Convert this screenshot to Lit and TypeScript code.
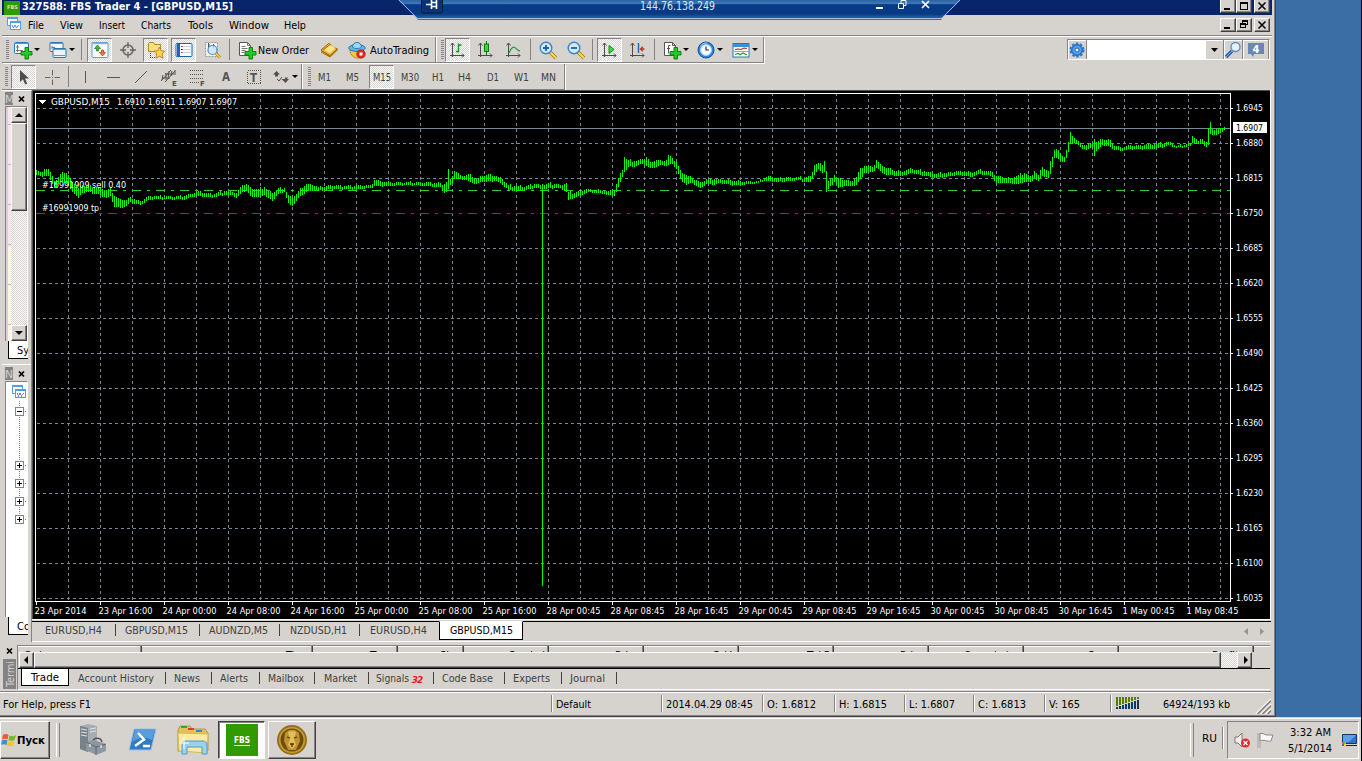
import { LitElement, html, svg, css, nothing, TemplateResult } from "lit";
import { customElement, property } from "lit/decorators.js";
import { classMap } from "lit/directives/class-map.js";
import { styleMap } from "lit/directives/style-map.js";

type Slot = [kind: string, width: number, name?: string, textWidth?: number];

const px = (n: number) => styleMap({ width: `${n}px` });

/* 18x18 icon artwork, keyed by name */
const plus = svg`<path d="M11 6.500h3.500v4h3.500v3.500h-3.500v4h-3.500v-4h-4v-3.500h4z" fill="#23cc23" stroke="#067806" stroke-width=".9"/>`;
const axes = svg`<path d="M3.500 2v14M1 14.500h14M1.500 4.500l2-2.500 2 2.500M13 12.500l2 2-2 2" fill="none" stroke="#4a4a4a"/>`;

const ICONS: Record<string, TemplateResult> = {
  addChart: svg`<rect x=".5" y="1.500" width="14" height="11" rx="1" fill="#f4faff" stroke="#2d74b5"/><path d="M1 2.500h13" stroke="#4e9ade"/><path d="M3.500 4v7M2 9.500h7M2 6h3" stroke="#777" fill="none"/>${plus}`,
  layers: svg`<rect x="1" y="1.500" width="13" height="9" rx="1" fill="#f4faff" stroke="#2d74b5"/><path d="M1 2.500h13" stroke="#4e9ade"/><path d="M3 5v3M3 6.500h3" stroke="#777"/><rect x="4" y="7.500" width="13" height="9" rx="1" fill="#e8f3fc" stroke="#2d74b5"/><path d="M4 8.500h13M5 14.500h11" stroke="#4e9ade"/>`,
  market: svg`<rect x="1" y="1.500" width="16" height="15" rx="1" fill="#fff" stroke="#5ba0d8"/><path d="M1 2.500h16" stroke="#7ab6e4" stroke-width="1.500"/><path d="M6.500 4l3 3.500h-2v2.500h-2v-2.500h-2z" fill="#3fb93f" stroke="#157a15" stroke-width=".7"/><path d="M11.500 15l-3-3.500h2v-2.500h2v2.500h2z" fill="#f07840" stroke="#b03808" stroke-width=".7"/>`,
  target: svg`<circle cx="9" cy="9" r="5" fill="none" stroke="#666" stroke-width="1.600"/><path d="M9 1v6M9 11v6M1 9h6M11 9h6" stroke="#666" stroke-width="1.300"/>`,
  favorites: svg`<path d="M1.500 10.500v-8l1-1h4l1 2h6v7z" fill="#f8df80" stroke="#b78912"/><path d="M3.500 12v5M5 16.500h3" stroke="#333" stroke-dasharray="1 1"/><path d="M12.500 6l1.700 3.700 3.700.5-2.700 2.800.7 4.200-3.400-2-3.500 2 .7-4.200-2.700-2.800 3.800-.5z" fill="#ffd35a" stroke="#b57a10" stroke-width=".9"/>`,
  terminal: svg`<rect x="1" y="2.500" width="16" height="13" rx="1" fill="#fff" stroke="#1b62a8"/><path d="M2 3h3v12h-3z" fill="#1d65b3"/><path d="M7 5.500h9M7 8.500h9M7 11.500h9" stroke="#b4d3ee"/><path d="M6 5.500h1.500M6 11.500h1.500" stroke="#c22"/><path d="M6 8.500h1.500" stroke="#111"/>`,
  tester: svg`<path d="M2.500 1.500h12v14h-12z" fill="#f0f0ee" stroke="#999" stroke-dasharray="2 1"/><path d="M5.500 2v5M10.500 3v5M5 4h2M9 5h3" stroke="#555"/><circle cx="9.500" cy="9" r="4.500" fill="#cfe6fa" fill-opacity=".85" stroke="#4e8cc8" stroke-width="1.200"/><path d="M13 12.500l4 4" stroke="#b08a10" stroke-width="3"/><path d="M13 12.500l4 4" stroke="#f5d550" stroke-width="1.500"/>`,
  newOrder: svg`<path d="M1.500 1.500h8l3 3v10h-11z" fill="#fff" stroke="#555"/><path d="M9.500 1.500v3h3M3.500 5.500h4M3.500 7.500h6M3.500 9.500h4M3.500 11.500h3" stroke="#777" fill="none"/>${plus}`,
  book: svg`<path d="M1 9l7.500-6.500 2 .7 1 2.300 6 2.500-7.500 7.500z" fill="#edba3c" stroke="#a26a08"/><path d="M3 9l7-5.500M1 9.500l9 5 7.500-6.500M1 11l9 5 7.500-7" fill="none" stroke="#a26a08"/><path d="M4.500 9l6-5 5 3-5.500 5z" fill="#ffe48b"/>`,
  auto: svg`<path d="M2 9c0 5 4 8 7.500 8s6-3 6-8z" fill="#f6c646" stroke="#bc8711"/><ellipse cx="9" cy="7" rx="8.300" ry="3.400" fill="#62b7e8" stroke="#2675b0"/><path d="M4.500 6c0-6 9-6 9 0-2 2-7 2-9 0z" fill="#9bd8f6" stroke="#2675b0"/><circle cx="13" cy="13" r="4.300" fill="#df2a20" stroke="#a91108" stroke-width=".6"/><rect x="11.500" y="11.500" width="3" height="3" fill="#fff"/>`,
  bars: svg`${axes}<path d="M9.500 2.500v9M7 10.500h2.500M9.500 4h3" stroke="#159415" stroke-width="1.400" fill="none"/>`,
  candles: svg`${axes}<path d="M9.500 0v14" stroke="#0c780c"/><rect x="7.500" y="3" width="4" height="7.500" fill="#36dd36" stroke="#0c780c"/>`,
  line: svg`${axes}<path d="M4 12c2-6 5-7 7-4.500 1 1.500 2 2 4 2.500" fill="none" stroke="#2b9a3c" stroke-width="1.300"/>`,
  zoomIn: svg`<path d="M11 11l6 6" stroke="#a67c09" stroke-width="3.600"/><path d="M11 11l6 6" stroke="#f7da58" stroke-width="2"/><circle cx="7" cy="7" r="5.800" fill="#cfeafc" stroke="#3c83c6" stroke-width="1.400"/><path d="M4 7h6M7 4v6" stroke="#205f9f" stroke-width="1.800"/>`,
  zoomOut: svg`<path d="M11 11l6 6" stroke="#a67c09" stroke-width="3.600"/><path d="M11 11l6 6" stroke="#f7da58" stroke-width="2"/><circle cx="7" cy="7" r="5.800" fill="#cfeafc" stroke="#3c83c6" stroke-width="1.400"/><path d="M4 7h6" stroke="#205f9f" stroke-width="1.800"/>`,
  scroll: svg`${axes}<path d="M8 4.500l5 4-5 4z" fill="#3ddc3d" stroke="#128a12"/>`,
  shift: svg`${axes}<path d="M9.500 2v10" stroke="#1f64a5" stroke-width="1.400"/><path d="M15.500 8h-4M13.800 5.800l-2.300 2.200 2.300 2.200" fill="none" stroke="#b83818" stroke-width="1.300"/>`,
  indicators: svg`<path d="M1.500 1.500h8l3 3v10h-11z" fill="#fff" stroke="#555"/><path d="M9.500 1.500v3h3M7.500 4.500h-2v8M4 7.500h3" stroke="#555" fill="none"/>${plus}`,
  clock: svg`<circle cx="9" cy="9" r="8" fill="#2e85d8" stroke="#12549a"/><circle cx="9" cy="9" r="5.500" fill="#f4f9fd" stroke="#a6cdf0"/><path d="M9 5.500v3.500h3" fill="none" stroke="#333" stroke-width="1.200"/><path d="M3.500 5.500a7 7 0 0 1 7-3.500" stroke="#9bcdf7" fill="none"/>`,
  template: svg`<rect x="1" y="2.500" width="16" height="13.500" fill="#fff" stroke="#2d74b5"/><path d="M1 3h16v3h-16z" fill="#3f8fd6"/><path d="M1 10.500h16" stroke="#7bb0dc"/><path d="M3 8.500l3-.5 3 .5 3-1.500 3 .5" fill="none" stroke="#a03020" stroke-width="1.200"/><path d="M3 13.500l3-1 2 1.200 3-1.700 4 2" fill="none" stroke="#269535" stroke-width="1.200"/>`,
  cursor: svg`<path d="M5 2v12l3-2.800 2.200 5.300 2-1-2.200-5h4z" fill="#4c4c4c"/>`,
  cross: svg`<path d="M9.500 2v5.500M9.500 11.500v5.500M2 9.500h5.500M11.500 9.500h5.500M9 9.500h1" stroke="#666"/>`,
  vline: svg`<path d="M9.500 3v12" stroke="#555"/>`,
  hline: svg`<path d="M3 9.500h13" stroke="#555"/>`,
  trend: svg`<path d="M3 15l12-12" stroke="#555"/>`,
  channel: svg`<path d="M1 13l10-11M5 14l10-11M3 7l-1 5M6 5l0 7M9 3l-1 8M12 3l-1 5M15 2v5M2 10h8M5 6h9" stroke="#555" fill="none"/><text x="12" y="18" class="mini">E</text>`,
  fibo: svg`<path d="M2 2.500h14M2 6.500h14M2 10.500h14M2 14.500h9" stroke="#555" stroke-dasharray="1 1"/><text x="12" y="18" class="mini">F</text>`,
  textA: svg`<text x="5" y="13" class="glyph">A</text>`,
  textT: svg`<rect x="2.500" y="2.500" width="13" height="13" fill="none" stroke="#555" stroke-dasharray="1 1" shape-rendering="crispEdges"/><text x="5" y="13.500" class="glyph">T</text>`,
  arrows: svg`<path d="M1 6.500l3.500-3.500 3.500 3.500h-2v2h-3v-2zM10 11h3v-1.500h3l-1 1.500h2l-3.500 4-4-4z" fill="#505050"/><path d="M5 11l2 2 3-4" stroke="#505050" fill="none"/>`,
  gear: svg`<circle cx="9" cy="9" r="5.500" fill="#3184dd" stroke="#1d5fae"/><circle cx="9" cy="9" r="6.500" fill="none" stroke="#2d78cc" stroke-width="2" stroke-dasharray="2.500 1.600"/><circle cx="9" cy="9" r="4.300" fill="#5b9fe8"/><circle cx="9" cy="9" r="2" fill="#eef6ff" stroke="#1d5fae"/>`,
  find: svg`<path d="M8 10l-6 6" stroke="#2456a8" stroke-width="3.200"/><path d="M8 10l-6 6" stroke="#80b5f0" stroke-width="1"/><circle cx="11.500" cy="6" r="4.500" fill="#e8f3fd" stroke="#5a8fcb" stroke-width="1.400"/>`,
};

const TOOLBAR: Slot[] = [
  ["grip", 10], ["icon", 21, "addChart"], ["arrow", 8], ["gap", 7], ["icon", 20, "layers"], ["arrow", 8], ["sep", 11],
  ["pressed", 25, "market"], ["gap", 3], ["icon", 25, "target"], ["gap", 3], ["pressed", 25, "favorites"], ["gap", 3],
  ["pressed", 25, "terminal"], ["gap", 3], ["icon", 25, "tester"], ["sep", 11], ["icon", 23, "newOrder"],
  ["label", 56, "New Order", 51], ["icon", 29, "book"], ["icon", 27, "auto"], ["label", 62, "AutoTrading", 59],
  ["edge", 7], ["grip", 6],
  ["pressed", 25, "bars"], ["gap", 3], ["icon", 25, "candles"], ["gap", 3], ["icon", 25, "line"], ["sep", 9],
  ["icon", 25, "zoomIn"], ["gap", 3], ["icon", 25, "zoomOut"], ["sep", 9], ["pressed", 25, "scroll"], ["gap", 3],
  ["icon", 25, "shift"], ["sep", 9], ["gap", 2], ["icon", 22, "indicators"], ["arrow", 5], ["gap", 7],
  ["icon", 22, "clock"], ["arrow", 5], ["gap", 8], ["icon", 22, "template"], ["arrow", 5],
];

const DRAWING: Slot[] = [
  ["grip", 9], ["pressed", 25, "cursor"], ["gap", 3], ["icon", 25, "cross"], ["sep", 9], ["icon", 24, "vline"], ["gap", 3],
  ["icon", 25, "hline"], ["gap", 3], ["icon", 25, "trend"], ["gap", 3], ["icon", 25, "channel"], ["gap", 3],
  ["icon", 25, "fibo"], ["gap", 4], ["icon", 25, "textA"], ["gap", 3], ["icon", 25, "textT"], ["gap", 4],
  ["icon", 22, "arrows"], ["arrow", 5], ["edge", 9], ["grip", 6],
  ["period", 25, "M1", 13], ["gap", 3], ["period", 25, "M5", 13], ["gap", 4], ["active", 25, "M15", 18], ["gap", 3],
  ["period", 25, "M30", 18], ["gap", 3], ["period", 25, "H1", 12], ["gap", 2], ["period", 25, "H4", 13], ["gap", 3],
  ["period", 25, "D1", 12], ["gap", 4], ["period", 25, "W1", 15], ["gap", 2], ["period", 25, "MN", 15],
];

/* [x, high y, low y] outline of the price series, interpolated every 2px */
const SERIES = [
  [36, 170, 174], [40, 172, 175], [44, 169, 175], [48, 169, 175], [52, 176, 183], [55, 182, 188], [58, 177, 183], [62, 172, 180],
  [66, 173, 183], [70, 178, 188], [74, 184, 193], [78, 188, 197], [82, 185, 192], [88, 186, 191], [94, 187, 193], [100, 187, 194],
  [106, 190, 197], [110, 188, 195], [114, 196, 206], [120, 199, 207], [126, 200, 205], [130, 197, 201], [134, 199, 203],
  [140, 201, 204], [146, 197, 200], [154, 196, 198], [170, 196, 198], [184, 196, 199], [190, 194, 196], [198, 191, 195],
  [206, 193, 196], [214, 194, 196], [224, 191, 194], [232, 192, 194], [236, 193, 197], [242, 185, 191], [246, 184, 190],
  [250, 187, 195], [258, 189, 196], [264, 187, 194], [268, 191, 197], [272, 193, 200], [278, 188, 193], [284, 188, 191],
  [288, 195, 202], [291, 198, 206], [296, 194, 200], [300, 188, 195], [306, 184, 191], [312, 185, 190], [318, 187, 190],
  [330, 185, 188], [346, 186, 188], [360, 185, 188], [370, 185, 187], [374, 180, 185], [380, 181, 185], [390, 182, 185],
  [400, 182, 184], [420, 182, 184], [440, 183, 186], [444, 184, 192], [446, 182, 191], [448, 169, 188], [450, 179, 184],
  [454, 171, 178], [460, 175, 178], [466, 175, 179], [470, 174, 181], [476, 179, 183], [482, 176, 181], [490, 174, 180],
  [496, 176, 180], [502, 179, 184], [508, 185, 189], [516, 186, 190], [526, 186, 189], [534, 184, 187], [540, 185, 188],
  [542, 184, 585], [544, 185, 188], [548, 183, 187], [554, 184, 187], [560, 185, 187], [566, 183, 191], [568, 192, 199],
  [574, 193, 197], [580, 190, 194], [590, 189, 191], [600, 190, 192], [608, 191, 194], [614, 190, 195], [618, 178, 186],
  [622, 170, 176], [624, 157, 171], [628, 160, 166], [636, 161, 165], [642, 159, 163], [646, 157, 165], [650, 162, 167],
  [656, 160, 166], [662, 161, 164], [666, 160, 165], [668, 155, 164], [672, 158, 163], [676, 162, 168], [680, 170, 178],
  [686, 175, 184], [692, 178, 182], [700, 182, 187], [706, 179, 183], [714, 179, 184], [720, 179, 182], [730, 180, 184],
  [740, 181, 184], [750, 181, 183], [758, 181, 182], [764, 178, 180], [770, 176, 180], [778, 178, 181], [790, 177, 180],
  [798, 177, 179], [804, 178, 181], [810, 176, 181], [814, 165, 174], [818, 163, 168], [822, 165, 172], [824, 161, 171],
  [826, 171, 191], [828, 181, 188], [834, 175, 181], [838, 178, 187], [844, 180, 185], [850, 181, 185], [856, 177, 184],
  [860, 168, 178], [864, 166, 172], [870, 166, 171], [874, 165, 170], [876, 160, 167], [880, 164, 170], [886, 168, 174],
  [892, 170, 174], [900, 171, 175], [912, 169, 172], [924, 171, 175], [936, 174, 177], [950, 172, 175], [960, 171, 174],
  [970, 172, 176], [978, 170, 173], [988, 171, 174], [992, 172, 176], [996, 176, 183], [1002, 177, 182], [1010, 178, 182],
  [1018, 175, 183], [1024, 173, 181], [1030, 176, 181], [1034, 171, 177], [1038, 175, 180], [1042, 167, 175], [1048, 171, 177],
  [1050, 161, 173], [1054, 150, 157], [1057, 149, 157], [1060, 153, 160], [1064, 157, 161], [1067, 147, 155], [1070, 132, 143],
  [1074, 138, 142], [1080, 143, 146], [1086, 145, 149], [1092, 144, 147], [1094, 139, 155], [1096, 142, 150], [1102, 139, 144],
  [1110, 140, 146], [1114, 146, 149], [1120, 147, 150], [1130, 145, 148], [1140, 145, 148], [1150, 144, 148], [1158, 143, 147],
  [1170, 142, 144], [1176, 146, 147], [1190, 143, 145], [1192, 136, 142], [1198, 141, 143], [1202, 139, 143], [1206, 142, 146],
  [1208, 128, 144], [1210, 122, 133], [1212, 129, 134], [1216, 129, 134], [1220, 128, 132], [1224, 126, 129],
];

const TIMES = [
  "23 Apr 2014", "23 Apr 16:00", "24 Apr 00:00", "24 Apr 08:00", "24 Apr 16:00", "25 Apr 00:00", "25 Apr 08:00",
  "25 Apr 16:00", "28 Apr 00:45", "28 Apr 08:45", "28 Apr 16:45", "29 Apr 00:45", "29 Apr 08:45", "29 Apr 16:45",
  "30 Apr 00:45", "30 Apr 08:45", "30 Apr 16:45", "1 May 00:45", "1 May 08:45",
];

function seriesPath() {
  let d = "";
  let k = 0;
  for (let x = 36; x <= 1224; x += 2) {
    while (k < SERIES.length - 2 && SERIES[k + 1][0] <= x) k++;
    const [x0, h0, l0] = SERIES[k];
    const [x1, h1, l1] = SERIES[k + 1];
    // the spike bar must not bleed into its neighbours
    const t = l0 > 500 || l1 > 500 ? (x === x1 ? 1 : 0) : (x - x0) / (x1 - x0);
    const wobble = x === x0 ? 0 : ((x * 7) % 5) / 2 - 1;
    const high = Math.round(h0 + (h1 - h0) * t + wobble);
    const low = Math.round(l0 + (l1 - l0) * t + wobble / 2);
    d += `M${x + 0.5} ${high}V${Math.max(low, high + 1) + 1}`;
  }
  return d;
}

const shared = css`
  .text {
    display: block;
    flex: none;
    overflow: visible;
    font-family: "DejaVu Sans Condensed", "DejaVu Sans", sans-serif;
    font-size: 11px;
    fill: currentColor;
  }

  .text.bold {
    font-weight: bold;
  }
`;

/** Single-line caption fitted to a fixed advance width. */
const label = (text: string, width: number, cls = "") => html`
  <svg class="text ${cls}" width=${width} height="14">
    <text y="11" textLength=${width} lengthAdjust="spacingAndGlyphs">${text}</text>
  </svg>
`;

@customElement("price-chart")
export class PriceChart extends LitElement {
  static styles = css`
    :host {
      display: block;
      width: 1238px;
      height: 529px;
      border-right: 1px solid #fff;
      background: #000;
    }

    svg {
      display: block;
      shape-rendering: crispEdges;
    }

    text {
      font-family: "DejaVu Sans Condensed", "DejaVu Sans", sans-serif;
      font-size: 9.5px;
      fill: #fff;
    }

    .grid {
      stroke: #778899;
      stroke-dasharray: 3 3;
      fill: none;
    }

    .order {
      stroke: #32cd32;
      stroke-dasharray: 9 6 3 6;
    }

    .profit {
      stroke: #f00;
    }

    .series {
      stroke: #0f0;
      fill: none;
    }

    .dark {
      fill: #000;
    }
  `;

  render() {
    const columns = Array.from({ length: 37 }, (_, i) => 68 + i * 32);
    const rows = Array.from({ length: 15 }, (_, i) => 108 + i * 35);
    return html`
      <svg width="1238" height="529" viewBox="32 90 1238 529">
        <path d="M32 90.500h1238M32.500 90v529" stroke="#505050" fill="none" />
        <path class="grid" d=${rows.map((y) => `M37 ${y + 0.5}H1230`).join("")} />
        <path d="M36 213.500H1230" stroke="#000" />
        <path class="grid" d=${columns.map((x) => `M${x + 0.5} 93V601`).join("")} />
        <path d="M36 128.500H1230" stroke="#778899" />
        <path class="order" d="M36 190.500H1230" />
        <path class="order profit" d="M36 213.500H1230" />
        <path class="series" d=${seriesPath()} />
        <path d="M35.500 93.500H1230.500V601.500H35.500z" stroke="#fff" fill="none" />
        <path d="M39 100h7l-3.500 4z" fill="#fff" />
        <text x="51" y="105" textLength="59" lengthAdjust="spacingAndGlyphs">GBPUSD,M15</text>
        <text x="117" y="105" textLength="120" lengthAdjust="spacingAndGlyphs">1.6910 1.6911 1.6907 1.6907</text>
        <text x="42" y="188" textLength="84" lengthAdjust="spacingAndGlyphs">#16991909 sell 0.40</text>
        <text x="42" y="211" textLength="57" lengthAdjust="spacingAndGlyphs">#16991909 tp</text>
        ${rows.map(
          (y, i) => svg`
            <path d="M1231 ${y + 0.5}h2" stroke="#fff"/>
            <text x="1236" y=${y + 3} textLength="27" lengthAdjust="spacingAndGlyphs">${(1.6945 - i * 0.0065).toFixed(4)}</text>
          `,
        )}
        <path d="M1233 122h34v11h-34z" fill="#fff" />
        <text class="dark" x="1236" y="131" textLength="27" lengthAdjust="spacingAndGlyphs">1.6907</text>
        ${TIMES.map(
          (t, i) => svg`
            <path d="M${36.5 + i * 64} 602v3" stroke="#fff"/>
            <text x=${34.5 + i * 64} y="614" textLength=${i === 0 || i > 16 ? 52 : 54} lengthAdjust="spacingAndGlyphs">${t}</text>
          `,
        )}
      </svg>
    `;
  }
}

@customElement("tool-strip")
export class ToolStrip extends LitElement {
  @property({ attribute: false })
  items: Slot[] = [];

  static styles = [
    shared,
    css`
      :host {
        display: flex;
        align-items: center;
        height: 25px;
        border-right: 1px solid #848284;
        border-bottom: 1px solid #848284;
        box-shadow: 1px 1px #fff;
      }

      .slot {
        display: flex;
        flex: none;
        align-items: center;
        justify-content: center;
        box-sizing: border-box;
        height: 24px;
      }

      .pressed {
        border: 1px solid;
        border-color: #848284 #fff #fff #848284;
        background: conic-gradient(#fff 25%, #d6d3ce 0 50%, #fff 0 75%, #d6d3ce 0) 0 0 / 2px 2px;
      }

      .label {
        justify-content: flex-start;
      }

      .period {
        color: #404040;
      }

      .icon {
        display: block;
        flex: none;
        overflow: visible;
      }

      .grip {
        width: 3px;
        height: 19px;
        background: repeating-linear-gradient(#848284 0 1px, #d6d3ce 1px 2px);
      }

      .line {
        width: 1px;
        height: 21px;
        background: #848284;
      }

      .edge {
        width: 1px;
        height: 25px;
        background: #848284;
        border-right: 1px solid #fff;
      }

      .caret {
        border: 3px solid transparent;
        border-top: 3px solid #000;
        border-bottom: 0;
      }

      .mini {
        font: bold 7px "DejaVu Sans", sans-serif;
        fill: #505050;
      }

      .glyph {
        font: bold 11.5px "DejaVu Sans Condensed", sans-serif;
        fill: #555;
      }
    `,
  ];

  private content([kind, , name = "", textWidth = 0]: Slot) {
    switch (kind) {
      case "grip":
        return html`<span class="grip"></span>`;
      case "sep":
        return html`<span class="line"></span>`;
      case "edge":
        return html`<span class="edge"></span>`;
      case "arrow":
        return html`<span class="caret"></span>`;
      case "label":
      case "period":
      case "active":
        return label(name, textWidth);
      case "gap":
        return nothing;
      default:
        return html`<svg class="icon" width="18" height="18">${ICONS[name]}</svg>`;
    }
  }

  render() {
    return this.items.map((item) => {
      const [kind, width] = item;
      const classes = {
        slot: true,
        pressed: kind === "pressed" || kind === "active",
        period: kind === "period" || kind === "active",
        label: kind === "label",
      };
      return html`<span class=${classMap(classes)} style=${px(width)}>${this.content(item)}</span>`;
    });
  }
}

@customElement("app-root")
export class AppRoot extends LitElement {
  static styles = [
    shared,
    css`
      :host {
        display: flex;
        flex-direction: column;
        position: relative;
        box-sizing: border-box;
        width: 1362px;
        height: 761px;
        overflow: hidden;
        border-right: 1px solid #000;
        background: #3a6ea5;
        color: #000;
      }

      .window {
        display: flex;
        flex-direction: column;
        flex: none;
        box-sizing: border-box;
        width: 1276px;
        height: 717px;
        padding-left: 2px;
        background: #d6d3ce;
        border-right: 1px solid #424142;
        border-bottom: 1px solid #424142;
        box-shadow: inset -1px -1px #848284;
      }

      .row {
        display: flex;
        align-items: center;
        flex: none;
      }

      .title {
        width: 1270px;
        height: 15px;
        background: #08246b;
        color: #fff;
      }

      .badge {
        width: 16px;
        height: 14px;
        margin: 0 2px 0 2px;
      }

      .title .text {
        margin-top: -4px;
      }

      .menu {
        width: 1270px;
        height: 20px;
      }

      .menu-icon {
        width: 21px;
        padding-left: 5px;
      }

      .controls {
        display: flex;
        margin-left: auto;
        padding-right: 2px;
      }

      .title .controls {
        margin-top: -4px;
      }

      .control {
        display: block;
        box-sizing: border-box;
        width: 16px;
        height: 14px;
        background: #d6d3ce;
        border: 1px solid;
        border-color: #fff #424142 #424142 #fff;
        box-shadow: inset -1px -1px #848284;
      }

      .control:last-child {
        margin-left: 2px;
      }

      .bars {
        align-items: flex-start;
        justify-content: space-between;
        border-top: 1px solid #848284;
        box-shadow: inset 0 1px #fff;
        padding-top: 1px;
        box-sizing: border-box;
        height: 28px;
        width: 1270px;
      }

      .bars.lower {
        border-top: 0;
        box-shadow: none;
        height: 27px;
      }

      .search {
        display: flex;
        box-sizing: border-box;
        width: 203px;
        height: 21px;
        margin: 2px 2px 0 0;
        border: 1px solid;
        border-color: #848284 #fff #fff #848284;
      }

      .search span {
        display: flex;
        align-items: center;
        justify-content: center;
        box-sizing: border-box;
        width: 19px;
        border-right: 1px solid #848284;
        box-shadow: inset 1px 1px #fff;
      }

      .search .field {
        width: 118px;
        background: #fff;
        border: 0;
      }

      .search .chat {
        width: 26px;
      }

      .work {
        display: flex;
        flex: none;
        height: 552px;
      }

      .side {
        display: flex;
        flex-direction: column;
        box-sizing: border-box;
        width: 30px;
        border-top: 1px solid #fff;
        border-right: 1px solid #848284;
        padding-left: 3px;
      }

      .caption {
        display: flex;
        align-items: center;
        flex: none;
        gap: 5px;
        height: 13px;
        margin: 1px 0;
      }

      .caption span {
        display: block;
        width: 8px;
        height: 13px;
        overflow: hidden;
        background: #848284;
        color: #d6d3ce;
      }

      .panel {
        display: flex;
        flex: none;
        align-items: flex-start;
        box-sizing: border-box;
        width: 23px;
        height: 236px;
        overflow: hidden;
        background: #fff;
        border-left: 1px solid #848284;
        border-top: 1px solid #848284;
        border-right: 1px solid #fff;
      }

      .market {
        height: 235px;
        align-items: stretch;
      }

      .tree {
        flex: none;
      }

      .thumbs {
        width: 5px;
        background: linear-gradient(90deg, #d6cfe4 0 2px, transparent 2px),
          repeating-linear-gradient(transparent 0 17px, #c7b0cc 17px 18px, transparent 18px 40px),
          linear-gradient(#fbe4e4 0 60%, #fff6dc 60%);
      }

      .vscroll {
        display: flex;
        flex-direction: column;
        flex: none;
        width: 16px;
        background: conic-gradient(#fff 25%, #d6d3ce 0 50%, #fff 0 75%, #d6d3ce 0) 0 0 / 2px 2px;
      }

      .raised {
        display: flex;
        align-items: center;
        justify-content: center;
        flex: none;
        box-sizing: border-box;
        background: #d6d3ce;
        border: 1px solid;
        border-color: #fff #424142 #424142 #fff;
        box-shadow: inset -1px -1px #848284;
      }

      .step {
        height: 16px;
      }

      .thumb {
        height: 88px;
      }

      .vscroll .step:last-child {
        margin-top: auto;
      }

      .sidetab {
        flex: none;
        box-sizing: border-box;
        width: 20px;
        height: 18px;
        margin-left: 3px;
        padding: 2px 0 0 8px;
        overflow: hidden;
        background: #fff;
        border-left: 1px solid #000;
        border-bottom: 1px solid #000;
      }

      .divider {
        flex: none;
        height: 1px;
        margin: 5px 0 1px -3px;
        background: #fff;
      }

      .charts {
        width: 1239px;
      }

      .charttabs {
        box-sizing: border-box;
        height: 23px;
        border-top: 1px solid #fff;
        border-bottom: 1px solid #fff;
        color: #404040;
        width: 1239px;
        align-items: stretch;
      }

      .charttabs::before {
        content: "";
        width: 2px;
        border-top: 1px solid #000;
        margin-top: 1px;
      }

      .tab {
        display: flex;
        align-items: center;
        justify-content: center;
        flex: none;
        box-sizing: border-box;
        border-top: 1px solid #000;
        margin-top: 1px;
        padding: 0 3px 3px 0;
      }

      .tab i {
        width: 1px;
        height: 12px;
        background: #404040;
      }

      .tab.mark {
        width: 1px;
        padding-right: 0;
      }

      .tab.on {
        border: 1px solid #000;
        border-top-color: #fff;
        background: #fff;
        color: #000;
        padding: 0 0 1px;
        margin-bottom: 1px;
      }

      .tabrest {
        display: flex;
        flex: 1;
        align-items: center;
        justify-content: flex-end;
        gap: 9px;
        margin-top: 1px;
        padding-right: 4px;
        border-top: 1px solid #000;
      }

      .terminal {
        display: flex;
        height: 49px;
        box-sizing: border-box;
        padding-top: 3px;
      }

      .termcap {
        display: flex;
        flex-direction: column;
        width: 15px;
        padding-top: 2px;
        align-items: center;
      }

      .termcap .upright {
        width: 13px;
        height: 30px;
        margin-top: 4px;
        background: #848284;
        overflow: hidden;
      }

      .upright text {
        fill: #d6d3ce;
        font: 11px "DejaVu Sans Condensed", sans-serif;
      }

      .termbody {
        width: 1252px;
        height: 44px;
        border-left: 1px solid #848284;
        border-bottom: 1px solid #fff;
      }

      .heads {
        display: flex;
        height: 7px;
        overflow: hidden;
        box-sizing: border-box;
        border-top: 1px solid #848284;
        box-shadow: inset 0 1px #fff;
      }

      .head {
        display: flex;
        justify-content: flex-end;
        box-sizing: border-box;
        flex: none;
        padding: 2px 3px 0 0;
        border-right: 1px solid #424142;
        box-shadow: inset -1px 0 #848284;
      }

      .head.first {
        justify-content: flex-start;
        padding-left: 6px;
      }

      .head.last {
        padding-right: 14px;
      }

      .hscroll {
        display: flex;
        height: 16px;
        border-bottom: 1px solid #000;
        padding-left: 1px;
      }

      .hscroll .step {
        width: 15px;
      }

      .hscroll .thumb {
        width: 1187px;
        height: 16px;
      }

      .hscroll .track {
        width: 16px;
        background: conic-gradient(#fff 25%, #d6d3ce 0 50%, #fff 0 75%, #d6d3ce 0) 0 0 / 2px 2px;
      }

      .termtabs {
        height: 20px;
        color: #404040;
        align-items: flex-start;
      }

      .termtabs .tab {
        height: 19px;
        margin-top: 0;
        padding-bottom: 1px;
        border-top: 0;
      }

      .termtabs .on {
        height: 17px;
        border: 1px solid #000;
        border-top: 0;
      }

      .count {
        font: italic bold 9px "DejaVu Sans", sans-serif;
        color: #f01818;
        padding: 4px 1px 0 3px;
        letter-spacing: -1px;
      }

      .status {
        width: 1271px;
        height: 24px;
        box-sizing: border-box;
        border-top: 1px solid #848284;
        box-shadow: inset 0 1px #fff;
        margin-left: -2px;
        padding-left: 3px;
        flex: none;
      }

      .field-cell {
        display: flex;
        align-items: center;
        height: 17px;
        box-sizing: border-box;
        padding-left: 4px;
        border-left: 1px solid #848284;
        box-shadow: inset 1px 0 #fff;
        flex: none;
      }

      .sizer {
        margin-left: auto;
        padding-top: 5px;
      }

      .taskbar {
        display: flex;
        box-sizing: border-box;
        width: 1361px;
        height: 44px;
        background: #d6d3ce;
        box-shadow: inset 0 1px #d6d3ce, inset 0 2px #fff;
        padding-top: 4px;
      }

      .start {
        width: 50px;
        height: 38px;
        justify-content: flex-start;
      }

      .handle {
        width: 2px;
        height: 34px;
        margin: 2px 0 0 6px;
        border-left: 1px solid #fff;
        border-right: 1px solid #848284;
      }

      .apps {
        display: flex;
        flex: 1;
        margin-left: 8px;
      }

      .app {
        display: flex;
        align-items: center;
        justify-content: center;
        box-sizing: border-box;
        width: 50px;
        height: 38px;
      }

      .app.raised {
        width: 48px;
      }

      .app.sunk {
        width: 47px;
        margin-right: 3px;
        border: 1px solid;
        border-color: #424142 #fff #fff #424142;
        box-shadow: inset 1px 1px #848284;
        background: #fff;
      }

      .lang {
        margin: 10px 5px 0 8px;
      }

      .tray {
        display: flex;
        align-items: center;
        box-sizing: border-box;
        width: 132px;
        height: 38px;
        margin-right: 2px;
        margin-left: 2px;
        border: 1px solid;
        border-color: #848284 #fff #fff #848284;
        padding-left: 6px;
      }

      .clock {
        display: flex;
        flex-direction: column;
        align-items: center;
        gap: 2px;
        width: 46px;
        margin: 0 8px 0 13px;
      }

      .rdp {
        position: absolute;
        left: 398px;
        top: 0;
        display: block;
      }

      .rdp text {
        font: 11.5px "DejaVu Sans Condensed", sans-serif;
        fill: #dbe8f8;
      }
    `,
  ];

  private winIconArt() {
    return svg`
      <path d="M.5 .5h10v8h-10z" fill="#fff" stroke="#4d9fe0"/><path d="M0 1h11" stroke="#4d9fe0" stroke-width="2"/>
      <path d="M3.500 4.500h10v8h-10z" fill="#fff" stroke="#4d9fe0"/><path d="M3 5h11" stroke="#4d9fe0" stroke-width="2"/>
      <path d="M5 8l1.500 3 1.500-3 1.500 3 2-3" stroke="#6b7fd8" fill="none"/>`;
  }

  private controls(middle: TemplateResult) {
    const glyph = (art: TemplateResult) =>
      html`<svg class="control" viewBox="0 0 14 12" shape-rendering="crispEdges">${art}</svg>`;
    return html`
      <span class="controls">
        ${glyph(svg`<path d="M3 9h6" stroke="#000" stroke-width="2"/>`)} ${glyph(middle)}
        ${glyph(svg`<path d="M3.500 2.500l7 7M10.500 2.500l-7 7" stroke="#000" stroke-width="1.500" shape-rendering="auto"/>`)}
      </span>
    `;
  }

  private cross() {
    return html`<svg width="8" height="8"><path d="M1 1.500l5 5M6 1.500l-5 5" stroke="#000" stroke-width="1.700" /></svg>`;
  }

  private triangle(d: string, fill = "#000") {
    return html`<svg width="8" height="8"><path d=${d} fill=${fill} /></svg>`;
  }

  private renderSide() {
    const boxes = [411, 465, 483, 501, 519];
    return html`
      <div class="side">
        <div class="caption"><span>${label("M", 9)}</span>${this.cross()}</div>
        <div class="panel market">
          <div class="thumbs"></div>
          <div class="vscroll">
            <div class="raised step">${this.triangle("M0 6l4-4 4 4z")}</div>
            <div class="raised thumb"></div>
            <div class="raised step">${this.triangle("M0 2l4 4 4-4z")}</div>
          </div>
        </div>
        <div class="sidetab">${label("Sy", 12)}</div>
        <div class="divider"></div>
        <div class="caption"><span>${label("N", 8)}</span>${this.cross()}</div>
        <div class="panel">
          <svg class="tree" width="22" height="235" viewBox="6 382 22 235" shape-rendering="crispEdges">
            <path d="M19.500 401V519" stroke="#848284" stroke-dasharray="1 1" />
            <g transform="translate(12 385)">${this.winIconArt()}</g>
            ${boxes.map(
              (y, i) => svg`
                <rect x="15.500" y=${y - 3.5} width="8" height="8" fill="#fff" stroke="#848284"/>
                <path d="M17 ${y + 0.5}h5${i ? `M19.5 ${y - 2}v5` : ""}" stroke="#000"/>
                <path d="M25 ${y + 0.5}h1" stroke="#848284"/>
              `,
            )}
          </svg>
        </div>
        <div class="sidetab">${label("Co", 13)}</div>
      </div>
    `;
  }

  private renderCharts() {
    const tabs: [string, number, number][] = [
      ["EURUSD,H4", 57, 81],
      ["GBPUSD,M15", 63, 83],
      ["AUDNZD,M5", 59, 79],
      ["NZDUSD,H1", 57, 79],
      ["EURUSD,H4", 57, 79],
    ];
    return html`
      <div class="charts">
        <price-chart></price-chart>
        <div class="row charttabs">
          ${tabs.map(
            ([name, textWidth, width], i) => html`
              <span class="tab" style=${px(width)}>${label(name, textWidth)}</span>
              ${i < 4 ? html`<span class="tab mark"><i></i></span>` : nothing}
            `,
          )}
          <span class="tab on" style=${px(84)}>${label("GBPUSD,M15", 63)}</span>
          <span class="tabrest">
            ${this.triangle("M6 0v7l-4-3.500z", "#949294")} ${this.triangle("M1 0v7l4-3.500z", "#949294")}
          </span>
        </div>
      </div>
    `;
  }

  private renderTerminal() {
    const heads: [string, number, number][] = [
      ["Order", 28, 124], ["Time", 23, 171], ["Type", 24, 85], ["Size", 20, 66], ["Symbol", 36, 85], ["Price", 25, 95],
      ["S / L", 22, 95], ["T / P", 23, 95], ["Price", 25, 95], ["Commission", 56, 95], ["Swap", 27, 95], ["Profit", 27, 135],
    ];
    // label, text width, distance to the divider that follows
    const tabs: [string, number, number][] = [
      ["Account History", 76, 97], ["News", 26, 46], ["Alerts", 28, 48], ["Mailbox", 36, 55], ["Market", 33, 54],
      ["Signals", 33, 65], ["Code Base", 51, 71], ["Experts", 37, 57], ["Journal", 35, 55],
    ];
    return html`
      <div class="terminal">
        <div class="termcap">
          ${this.cross()}
          <svg class="upright"><text transform="translate(11 28) rotate(-90)" textLength="26">Termi</text></svg>
        </div>
        <div class="termbody">
          <div class="heads">
            ${heads.map(
              ([name, textWidth, width], i) => html`
                <span class="head ${i === 0 ? "first" : i === 11 ? "last" : ""}" style=${px(width)}>
                  ${label(name, textWidth)}
                </span>
              `,
            )}
          </div>
          <div class="hscroll">
            <div class="raised step">${this.triangle("M5 0v8l-4-4z")}</div>
            <div class="raised thumb"></div>
            <div class="track"></div>
            <div class="raised step">${this.triangle("M3 0v8l4-4z")}</div>
          </div>
          <div class="row termtabs">
            <span class="tab" style=${px(2)}></span>
            <span class="tab on" style=${px(48)}>${label("Trade", 28)}</span>
            ${tabs.map(
              ([name, textWidth, width]) => html`
                <span class="tab" style=${px(width - 1)}>
                  ${label(name, textWidth)} ${name === "Signals" ? html`<span class="count">32</span>` : nothing}
                </span>
                <span class="tab mark"><i></i></span>
              `,
            )}
          </div>
        </div>
      </div>
    `;
  }

  private renderStatus() {
    const cells: [string, number, number][] = [
      ["Default", 35, 110], ["2014.04.29 08:45", 87, 101], ["O: 1.6812", 49, 72], ["H: 1.6815", 48, 70],
      ["L: 1.6807", 46, 69], ["C: 1.6813", 48, 71], ["V: 165", 31, 66],
    ];
    return html`
      <div class="row status">
        <span style=${px(548)}>${label("For Help, press F1", 88)}</span>
        ${cells.map(
          ([text, textWidth, width]) => html`
            <span class="field-cell" style=${px(width)}>${label(text, textWidth)}</span>
          `,
        )}
        <span class="field-cell" style=${px(53)}>
          <svg width="25" height="13" shape-rendering="crispEdges">
            ${[0, 1, 2, 3, 4, 5, 6, 7].map(
              (i) => svg`
                <path d="M${2 + i * 3} 0V${9 - i}" stroke="#5a7d00" stroke-width="2"/>
                <path d="M${2 + i * 3} ${10 - i}V12" stroke="#083c66" stroke-width="2"/>
              `,
            )}
          </svg>
        </span>
        ${label("64924/193 kb", 67)}
        <svg class="sizer" width="16" height="16">
          <path d="M1 16L16 1M6 16L16 6M11 16l5-5" stroke="#fff" stroke-width="1.500" />
          <path d="M2.500 16L16 2.500M7.500 16L16 7.500M12.500 16l3.500-3.500" stroke="#848284" stroke-width="1.700" />
        </svg>
      </div>
    `;
  }

  private renderTaskbar() {
    return html`
      <div class="taskbar">
        <div class="raised start">
          <svg width="16" height="16">
            <path d="M2 3c2-1.500 4-1 5.500 0l-1 4.500c-2-1-4-1-5.500 0z" fill="#ef5a28" />
            <path d="M8.500 3.500c2 1 4 1 6.500-.5l-1.500 5c-2 1-4 1-6 0z" fill="#75b82a" />
            <path d="M1 8.500c1.500-1 3.500-1 5.500 0l-1 4.500c-2-1-4-1-5.500 0z" fill="#3b8ede" />
            <path d="M7 9c2 1 4 1 6.500 0l-1.500 4.500c-2 1-4 1-6.500 0z" fill="#f5c52a" />
          </svg>
          ${label("Пуск", 28, "bold")}
        </div>
        <span class="handle"></span>
        <div class="apps">
          <span class="app">
            <svg width="30" height="32">
              <path d="M2 2l8-2 9 2v22l-9 4-8-3z" fill="#a6aeb4" />
              <path d="M2 2l8 2v24l-8-3z" fill="#78828a" />
              <path d="M3 5l6 1M3 8l6 1M3 11l6 1M12 5l6-1M12 8l6-1" stroke="#dde3e7" />
              <path d="M15 18c0-5 8-5 9 0" fill="none" stroke="#4c565e" stroke-width="1.500" />
              <path d="M8 18l8-2 12 4v7l-10 4-10-5z" fill="#8d98a1" />
              <path d="M8 18l10 5 10-3M18 23v8" fill="none" stroke="#5c6870" />
              <path d="M12 20v3M23 21v3" stroke="#dde3e7" stroke-width="1.500" />
            </svg>
          </span>
          <span class="app">
            <svg width="28" height="24">
              <path d="M5 1h22l-5 21H0z" fill="#2f7bc4" stroke="#9cc4e8" />
              <path d="M6 2h20l-3 10C15 8 9 10 3 14z" fill="#5b9dd8" />
              <path d="M9 5l6 6.500L6 18M14 18h7" fill="none" stroke="#fff" stroke-width="2.500" />
            </svg>
          </span>
          <span class="app">
            <svg width="34" height="32">
              <path d="M2 6l2-4h10l2 3h13l3 4v18H2z" fill="#e3c05c" stroke="#ba9638" />
              <path d="M5 3h6" stroke="#2ba84a" stroke-width="2" />
              <path d="M12 5h6" stroke="#d8402e" stroke-width="2" />
              <path d="M20 7h6" stroke="#3c86d0" stroke-width="2" />
              <path d="M2 9l30 1-1 19-28-2z" fill="#fbe9a4" stroke="#d9b955" />
              <path d="M6 30V21c0-3 2-4 4-4h17c2 0 4 1 4 4v9h-5v-7H11v7z" fill="#9ad2ee" stroke="#4e9cc8" />
              <path d="M8 13v12M3 19h10" stroke="#fff" />
            </svg>
          </span>
          <span class="app sunk">
            <svg width="32" height="32">
              <path d="M0 0h32v32H0z" fill="#319a00" />
              <text x="8" y="19" textLength="16" lengthAdjust="spacingAndGlyphs" fill="#fff" font-family="DejaVu Sans Condensed" font-weight="bold" font-size="9.500">FBS</text>
              <path d="M8 21.500h16" stroke="#fff" />
            </svg>
          </span>
          <span class="app raised">
            <svg width="32" height="32">
              <circle cx="16" cy="16" r="15" fill="#96701a" />
              <circle cx="16" cy="16" r="13" fill="#caa03a" />
              <circle cx="16" cy="16" r="11.500" fill="#6d4c0c" />
              <path d="M9 9l4-3h6l4 3 1 8-4 9h-8l-4-9z" fill="#c0932f" />
              <path d="M12 8l2 7-2 6 4 4 4-4-2-6 2-7-4-1z" fill="#e2bd5c" />
              <path d="M11 13l3 1M21 13l-3 1M14 20h4M16 20v3" stroke="#4c3206" stroke-width="1.300" />
            </svg>
          </span>
        </div>
        <span class="handle"></span>
        <span class="lang">${label("RU", 15)}</span>
        <svg width="3" height="30"><path d="M.5 6v22" stroke="#848284" /><path d="M1.500 6v22" stroke="#fff" /></svg>
        <div class="tray">
          <svg width="40" height="18">
            <path d="M1 6h3l4-4v14l-4-4H1z" fill="#eee" stroke="#777" />
            <circle cx="11.500" cy="12" r="4.500" fill="#e02c2c" />
            <path d="M9.500 10l4 4M13.500 10l-4 4" stroke="#fff" stroke-width="1.300" />
            <path d="M25 2v15" stroke="#777" stroke-width="2.500" />
            <path d="M25 2v15" stroke="#fff" />
            <path d="M26 2.500c3-1 5 2 8 1.500h5l-2 6c-4 1-7-2-11 0z" fill="#f8f8f8" stroke="#888" />
          </svg>
          <div class="clock">${label("3:32 AM", 41)} ${label("5/1/2014", 44)}</div>
          <svg width="17" height="15">
            <path d="M1.500 1.500h14v9h-14z" fill="#2e72d0" stroke="#14386e" />
            <path d="M2 2h13l-7 7H2z" fill="#5fa0ec" />
            <path d="M5 12h11v1H5z" fill="#222" />
            <path d="M1 9h2v2H1z" fill="#f25c22" /><path d="M3 9h2v2H3z" fill="#7fc241" />
            <path d="M1 11h2v2H1z" fill="#46b" /><path d="M3 11h2v2H3z" fill="#fc2" />
          </svg>
        </div>
      </div>
    `;
  }

  private renderRemoteBar() {
    return html`
      <svg class="rdp" width="564" height="21">
        <defs>
          <linearGradient id="rdp" x2="0" y2="1">
            <stop offset="0" stop-color="#2a64a4" />
            <stop offset=".2" stop-color="#4078b4" />
            <stop offset=".25" stop-color="#083c88" />
            <stop offset=".75" stop-color="#083a82" />
            <stop offset="1" stop-color="#2e66a8" />
          </linearGradient>
        </defs>
        <path d="M0 0L19 18.500H543L562 0z" fill="url(#rdp)" />
        <path d="M1 0L19.500 18.500H543.500L562 0" fill="none" stroke="#a9bcd0" />
        <path d="M19.500 19.500H543.500" stroke="#62666c" />
        <rect x="23.500" y="-4" width="21" height="17" rx="2" fill="#0a3474" stroke="#03193c" />
        <path d="M28 4.500h5M33.500 0v9M33 2.500h6M33 6.500h6M38.500 0v9" stroke="#fff" stroke-width="1.600" fill="none" />
        <text x="242" y="10" textLength="75" lengthAdjust="spacingAndGlyphs">144.76.138.249</text>
        <path d="M478 8h7" stroke="#fff" stroke-width="2" />
        <path d="M500.500 3.500h5v5h-5zM503 3V.5h5v5h-2" stroke="#fff" fill="none" />
        <path d="M524 1l7 7M531 1l-7 7" stroke="#fff" stroke-width="1.700" />
      </svg>
    `;
  }

  render() {
    const menus: [string, number, number][] = [
      ["File", 16, 32], ["View", 23, 39], ["Insert", 26, 42], ["Charts", 30, 47], ["Tools", 25, 41], ["Window", 40, 55],
      ["Help", 22, 40],
    ];
    return html`
      <div class="window">
        <div class="row title">
          <svg class="badge">
            <path d="M0 0h16v14H0z" fill="#319a00" />
            <text x="3" y="8" font-family="DejaVu Sans" font-size="5" font-weight="bold" fill="#cfe8c0">FBS</text>
          </svg>
          ${label("327588: FBS Trader 4 - [GBPUSD,M15]", 211, "bold")}
          ${this.controls(svg`<path d="M3.500 2.500h7v7h-7zM3 3h8" stroke="#000" fill="none"/>`)}
        </div>
        <div class="row menu">
          <span class="menu-icon"><svg width="14" height="13">${this.winIconArt()}</svg></span>
          ${menus.map(([name, textWidth, width]) => html`<span style=${px(width)}>${label(name, textWidth)}</span>`)}
          ${this.controls(svg`<path d="M5.500 4V1.500h5v4h-2M5 2h6M3.500 4.500h5v4h-5zM3 5h6" stroke="#000" fill="none"/>`)}
        </div>
        <div class="row bars">
          <tool-strip .items=${TOOLBAR} style=${px(761)}></tool-strip>
          <div class="search">
            <span><svg width="18" height="18">${ICONS.gear}</svg></span>
            <span class="field"></span>
            <span><svg width="7" height="4"><path d="M0 0h7l-3.500 4z" /></svg></span>
            <span><svg width="18" height="18">${ICONS.find}</svg></span>
            <span class="chat">
              <svg width="17" height="17">
                <path d="M1 2h16v11H7l-1 3-2-3H1z" fill="#6b86b5" />
                <text x="5.500" y="12" font-family="DejaVu Sans" font-weight="bold" font-size="10" fill="#fff">4</text>
              </svg>
            </span>
          </div>
        </div>
        <div class="row bars lower">
          <tool-strip .items=${DRAWING} style=${px(562)}></tool-strip>
        </div>
        <div class="work">${this.renderSide()} ${this.renderCharts()}</div>
        ${this.renderTerminal()} ${this.renderStatus()}
      </div>
      ${this.renderTaskbar()} ${this.renderRemoteBar()}
    `;
  }
}

declare global {
  interface HTMLElementTagNameMap {
    "app-root": AppRoot;
    "price-chart": PriceChart;
    "tool-strip": ToolStrip;
  }
}
